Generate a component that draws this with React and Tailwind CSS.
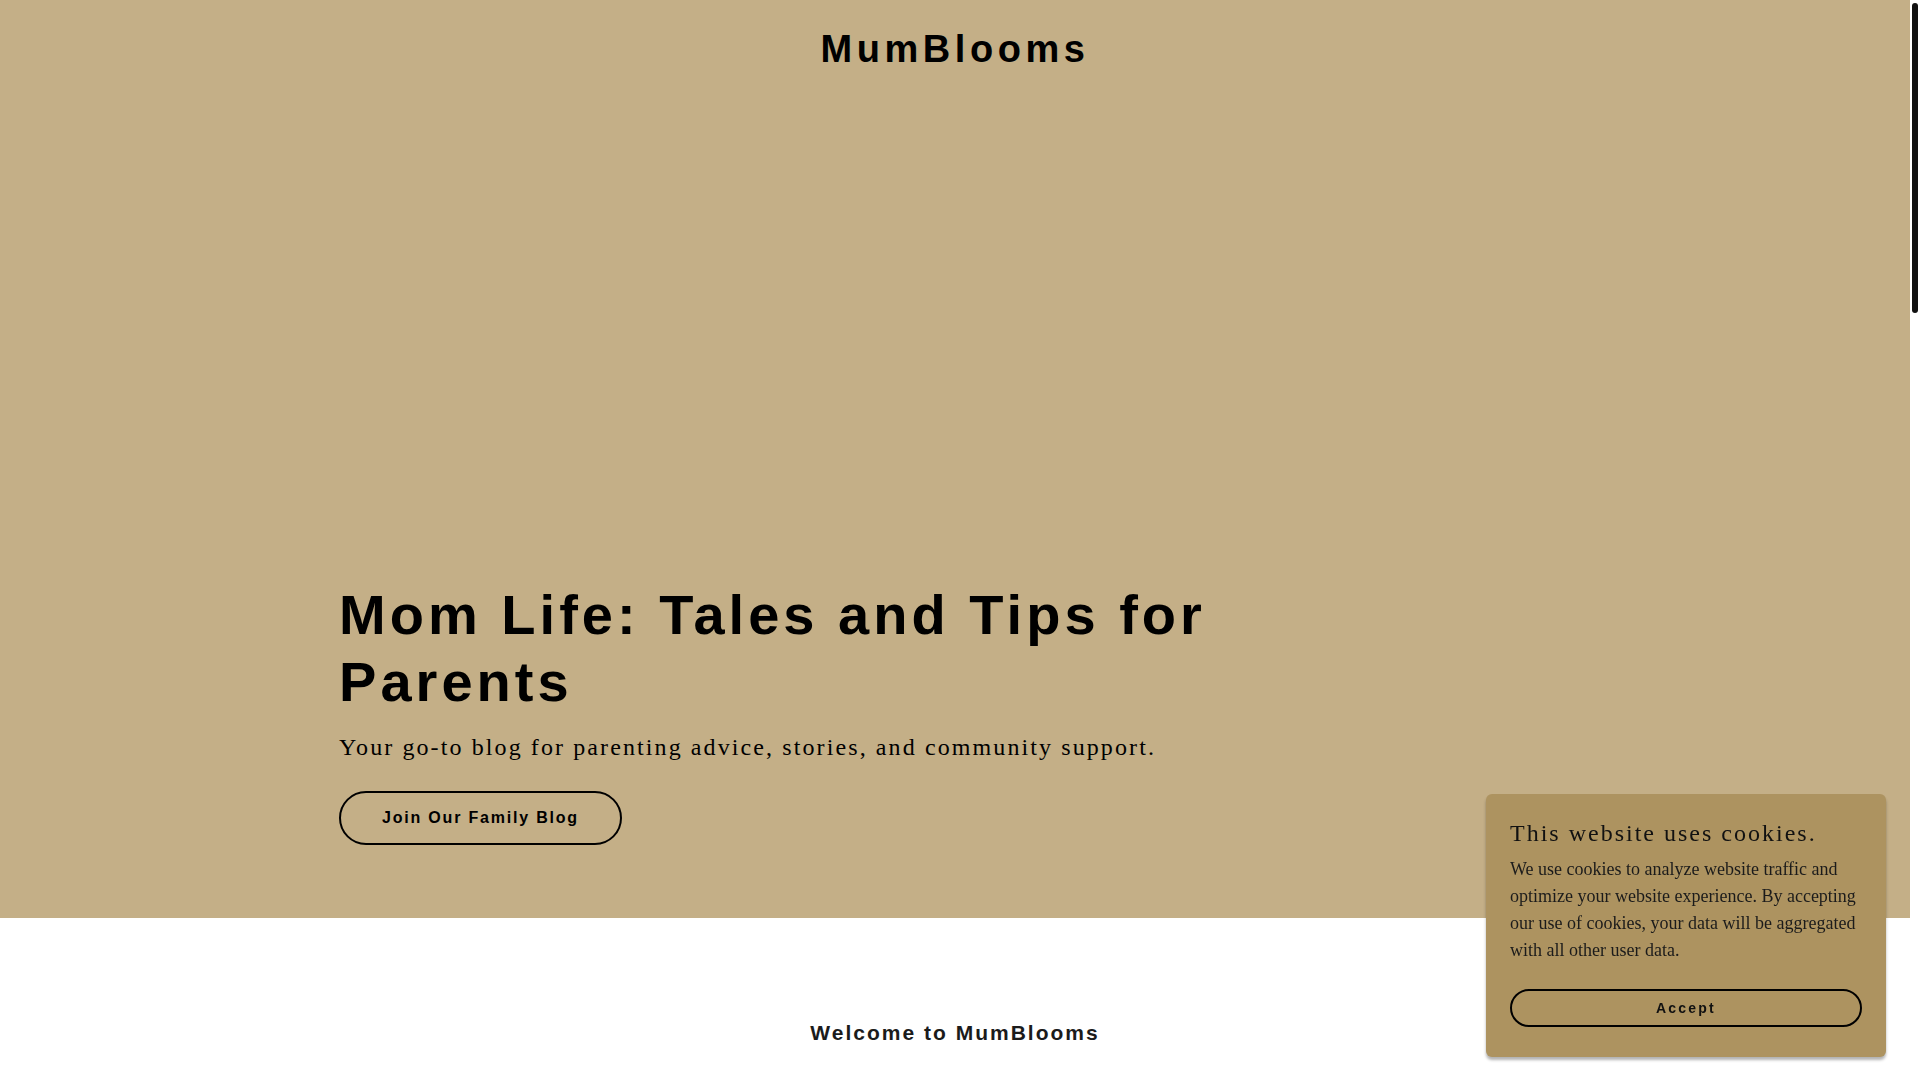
const CookieBanner = () => {
  return (
    <div className="fixed right-[34px] bottom-[23px] w-[400px] rounded-[6px] bg-[#ad9360] px-[24px] pt-[24px] pb-[30px] shadow-[0_3px_3px_rgba(0,0,0,0.3)]">
      <h3 className="font-['Liberation_Serif',serif] text-[24px] leading-[30px] tracking-[2px] text-[#111]">
        This website uses cookies.
      </h3>
      <p className="mt-[8px] font-['Liberation_Serif',serif] text-[18px] leading-[27px] text-[#1b1b1b]">
        We use cookies to analyze website traffic and optimize your website
        experience. By accepting our use of cookies, your data will be
        aggregated with all other user data.
      </p>
      <button className="mt-[25px] flex h-[38px] w-full items-center justify-center rounded-full border-2 border-black font-['Liberation_Sans',sans-serif] text-[14px] font-bold tracking-[2.2px] text-[#111]">
        Accept
      </button>
    </div>
  );
};

// page scrollbar as it looks in the browser window
const ScrollBar = () => {
  return (
    <div className="fixed top-0 right-0 h-screen w-[10px] bg-white px-[2px] pt-[3px]">
      <div className="h-[310px] rounded-full bg-[#111]" />
    </div>
  );
};

const App = () => {
  return (
    <div className="min-h-screen bg-white pr-[10px]">
      {/* hero */}
      <section className="flex h-[918px] flex-col bg-[#c4af87]">
        <header className="pt-[26px] text-center">
          <h1 className="font-['Liberation_Sans',sans-serif] text-[38px] leading-[47px] font-bold tracking-[0.12em] text-black">
            MumBlooms
          </h1>
        </header>
        <div className="flex-1" />
        <div className="mx-auto w-full max-w-[1232px] pb-[73px]">
          <h2 className="max-w-[960px] font-['Liberation_Sans',sans-serif] text-[56px] leading-[67px] font-bold tracking-[0.072em] text-black">
            Mom Life: Tales and Tips for Parents
          </h2>
          <p className="mt-[14px] font-['Liberation_Serif',serif] text-[24px] leading-[36px] tracking-[2.1px] text-black">
            Your go-to blog for parenting advice, stories, and community support.
          </p>
          <button className="mt-[26px] flex h-[54px] items-center rounded-full border-2 border-black px-[41px] font-['Liberation_Sans',sans-serif] text-[16px] font-bold tracking-[1.8px] text-black">
            Join Our Family Blog
          </button>
        </div>
      </section>

      <main className="pt-[102px]">
        <h2 className="text-center font-['Liberation_Sans',sans-serif] text-[21px] leading-[26px] font-bold tracking-[2px] text-[#1b1b1b]">
          Welcome to MumBlooms
        </h2>
      </main>

      <CookieBanner />
      <ScrollBar />
    </div>
  );
};

export default App;
